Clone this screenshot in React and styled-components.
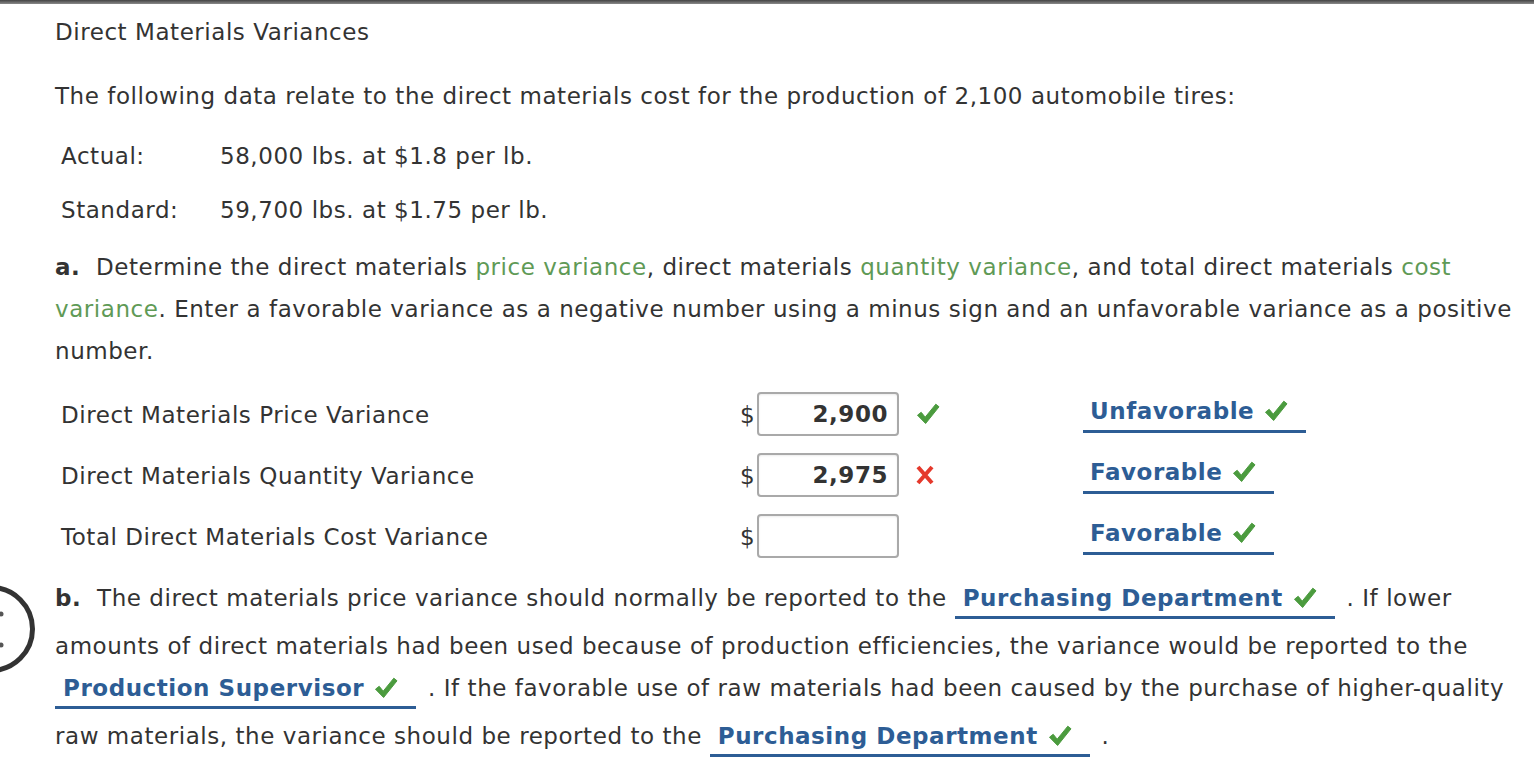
import React from "react";
import styled, { createGlobalStyle } from "styled-components";

const Global = createGlobalStyle`
  html, body { margin: 0; padding: 0; background: #fff; }
  body {
    font-family: "DejaVu Sans", Verdana, sans-serif;
    color: #333;
    font-size: 23px;
    letter-spacing: 0.55px;
    overflow: hidden;
  }
`;

const Page = styled.div`
  position: relative;
  width: 1534px;
  height: 770px;
  overflow: hidden;
`;

const TopBar = styled.div`
  height: 4px;
  background: linear-gradient(to bottom, #444, #8a8a8a);
`;

const Content = styled.div`
  padding: 0 20px 0 55px;
`;

const Title = styled.h1`
  margin: 13px 0 0;
  font-size: 23px;
  font-weight: normal;
  line-height: 30px;
  color: #333;
`;

const Para = styled.p`
  margin: ${(p) => p.$mt || 0}px 0 0;
  line-height: 42px;
`;

const DataTable = styled.div`
  display: grid;
  grid-template-columns: 159px auto;
  margin-top: 12px;
  & > span {
    line-height: 54px;
    padding-left: 6px;
  }
`;

const Green = styled.span`
  color: #5f9a56;
`;

const Bold = styled.b`
  font-weight: bold;
`;

const AnswerGrid = styled.div`
  display: grid;
  grid-template-columns: 680px 22px 142px 184px auto;
  grid-auto-rows: 61px;
  margin-top: 11px;
  align-items: center;
`;

const Label = styled.div`
  padding-left: 6px;
  padding-top: 2px;
`;

const Dollar = styled.div`
  padding-left: 5px;
  padding-top: 2px;
`;

const InputBox = styled.div`
  box-sizing: border-box;
  height: 44px;
  border: 2px solid #a9a9a9;
  border-radius: 4px;
  box-shadow: inset 0 1px 2px rgba(0, 0, 0, 0.08);
  text-align: right;
  padding-right: 9px;
  font-weight: bold;
  line-height: 40px;
  color: #333;
`;

const IconCell = styled.div`
  padding-left: 16px;
  display: flex;
  align-items: center;
`;

const SelectCell = styled.div`
  align-self: start;
`;

const Select = styled.span`
  display: inline-flex;
  align-items: center;
  gap: 9px;
  padding: ${(p) => (p.$inline ? "0 17px 5px 8px" : "0 17px 6px 7px")};
  border-bottom: 3px solid #2d5d95;
  color: #2d5d95;
  font-weight: bold;
  line-height: 26px;
  vertical-align: baseline;
  margin: ${(p) => (p.$inline ? "0 4px 6px 0" : "15px 0 0")};
`;

const Overlay = styled.div`
  position: absolute;
  left: -60px;
  top: 580px;
`;

const Check = () => (
  <svg width="26" height="24" viewBox="0 0 26 24">
    <path
      d="M2.5 13.2 L6.2 10.3 L10.2 15.2 L20.8 2.2 L24 4.8 L10.6 21.5 Z"
      fill="#4b9b3e"
      stroke="#4b9b3e"
      strokeWidth="1"
      strokeLinejoin="round"
    />
  </svg>
);

const Cross = () => (
  <svg width="20" height="20" viewBox="0 0 20 20">
    <path d="M3 2 L17 18 M17 2 L3 18" stroke="#e5392c" strokeWidth="4" />
  </svg>
);

const Choice = ({ children, inline }) => (
  <Select $inline={inline}>
    <span>{children}</span>
    <Check />
  </Select>
);

const rows = [
  { label: "Direct Materials Price Variance", value: "2,900", mark: "ok", choice: "Unfavorable" },
  { label: "Direct Materials Quantity Variance", value: "2,975", mark: "bad", choice: "Favorable" },
  { label: "Total Direct Materials Cost Variance", value: "", mark: null, choice: "Favorable" },
];

export default function App() {
  return (
    <Page>
      <Global />
      <TopBar />
      <Content>
        <Title>Direct Materials Variances</Title>
        <Para $mt={28}>
          The following data relate to the direct materials cost for the production of 2,100 automobile tires:
        </Para>
        <DataTable>
          <span>Actual:</span>
          <span>58,000 lbs. at $1.8 per lb.</span>
          <span>Standard:</span>
          <span>59,700 lbs. at $1.75 per lb.</span>
        </DataTable>
        <Para $mt={9}>
          <Bold>a.</Bold>&nbsp; Determine the direct materials <Green>price variance</Green>, direct materials{" "}
          <Green>quantity variance</Green>, and total direct materials <Green>cost variance</Green>. Enter a
          favorable variance as a negative number using a minus sign and an unfavorable variance as a positive
          number.
        </Para>
        <AnswerGrid>
          {rows.map((r) => (
            <React.Fragment key={r.label}>
              <Label>{r.label}</Label>
              <Dollar>$</Dollar>
              <InputBox>{r.value}</InputBox>
              <IconCell>{r.mark === "ok" ? <Check /> : r.mark === "bad" ? <Cross /> : null}</IconCell>
              <SelectCell>
                <Choice>{r.choice}</Choice>
              </SelectCell>
            </React.Fragment>
          ))}
        </AnswerGrid>
        <Para $mt={11}>
          <Bold>b.</Bold>&nbsp; The direct materials price variance should normally be reported to the{" "}
          <Choice inline>Purchasing Department</Choice> . If lower amounts of direct materials had been used
          because of production efficiencies, the variance would be reported to the{" "}
          <Choice inline>Production Supervisor</Choice> . If the favorable use of raw materials had been caused by
          the purchase of higher-quality raw materials, the variance should be reported to the{" "}
          <Choice inline>Purchasing Department</Choice> .
        </Para>
      </Content>
      <Overlay>
        <svg width="100" height="100" viewBox="0 0 100 100">
          <circle cx="51" cy="49" r="41.5" fill="none" stroke="#333" strokeWidth="5" />
          <circle cx="61" cy="34" r="2.5" fill="#555" />
          <circle cx="61" cy="65" r="2.5" fill="#555" />
        </svg>
      </Overlay>
    </Page>
  );
}
